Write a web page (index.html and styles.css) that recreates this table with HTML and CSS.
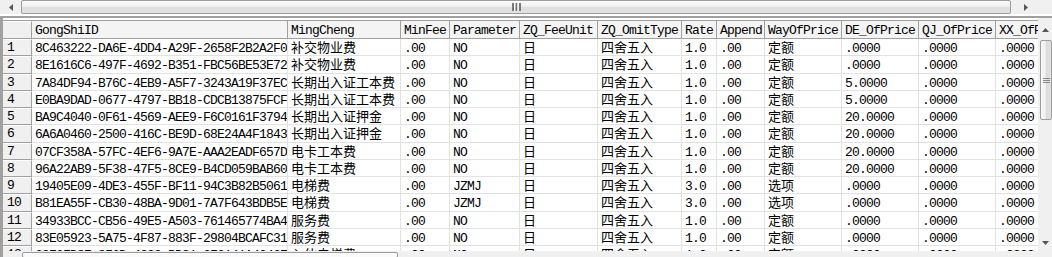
FILE: index.html
```html
<!DOCTYPE html>
<html lang="zh">
<head>
<meta charset="utf-8">
<link rel="stylesheet" href="styles.css">
</head>
<body>
<div class="win">
  <div class="hs-top">
    <div class="hs-btn"><svg width="4" height="7" viewBox="0 0 4 7"><path d="M4 0 L0 3.5 L4 7 Z" fill="#555"/></svg></div>
    <div class="hs-thumb"><svg width="9" height="8" viewBox="0 0 9 8"><g fill="#777"><rect x="0" y="0" width="2" height="8"/><rect x="3.5" y="0" width="2" height="8"/><rect x="7" y="0" width="2" height="8"/></g><g fill="#fff"><rect x="2" y="0" width="1" height="8"/><rect x="5.5" y="0" width="1" height="8"/></g></svg></div>
    <div class="hs-btn hs-right"><svg width="4" height="7" viewBox="0 0 4 7"><path d="M0 0 L4 3.5 L0 7 Z" fill="#555"/></svg></div>
    <div class="hs-corner"></div>
  </div>
  <div class="frame">
    <div class="grid">
      <div class="row head">
        <div class="rh"></div><div class="c">GongShiID</div><div class="c">MingCheng</div><div class="c">MinFee</div><div class="c">Parameter</div><div class="c">ZQ_FeeUnit</div><div class="c">ZQ_OmitType</div><div class="c">Rate</div><div class="c">Append</div><div class="c">WayOfPrice</div><div class="c">DE_OfPrice</div><div class="c">QJ_OfPrice</div><div class="c">XX_OfPrice</div>
      </div>
      <div class="row"><div class="rh">1</div><div class="c">8C463222-DA6E-4DD4-A29F-2658F2B2A2F0</div><div class="c zh">补交物业费</div><div class="c">.00</div><div class="c">NO</div><div class="c zh">日</div><div class="c zh">四舍五入</div><div class="c">1.0</div><div class="c">.00</div><div class="c zh">定额</div><div class="c">.0000</div><div class="c">.0000</div><div class="c">.0000</div></div>
      <div class="row"><div class="rh">2</div><div class="c">8E1616C6-497F-4692-B351-FBC56BE53E72</div><div class="c zh">补交物业费</div><div class="c">.00</div><div class="c">NO</div><div class="c zh">日</div><div class="c zh">四舍五入</div><div class="c">1.0</div><div class="c">.00</div><div class="c zh">定额</div><div class="c">.0000</div><div class="c">.0000</div><div class="c">.0000</div></div>
      <div class="row"><div class="rh">3</div><div class="c">7A84DF94-B76C-4EB9-A5F7-3243A19F37EC</div><div class="c zh">长期出入证工本费</div><div class="c">.00</div><div class="c">NO</div><div class="c zh">日</div><div class="c zh">四舍五入</div><div class="c">1.0</div><div class="c">.00</div><div class="c zh">定额</div><div class="c">5.0000</div><div class="c">.0000</div><div class="c">.0000</div></div>
      <div class="row"><div class="rh">4</div><div class="c">E0BA9DAD-0677-4797-BB18-CDCB13875FCF</div><div class="c zh">长期出入证工本费</div><div class="c">.00</div><div class="c">NO</div><div class="c zh">日</div><div class="c zh">四舍五入</div><div class="c">1.0</div><div class="c">.00</div><div class="c zh">定额</div><div class="c">5.0000</div><div class="c">.0000</div><div class="c">.0000</div></div>
      <div class="row"><div class="rh">5</div><div class="c">BA9C4040-0F61-4569-AEE9-F6C0161F3794</div><div class="c zh">长期出入证押金</div><div class="c">.00</div><div class="c">NO</div><div class="c zh">日</div><div class="c zh">四舍五入</div><div class="c">1.0</div><div class="c">.00</div><div class="c zh">定额</div><div class="c">20.0000</div><div class="c">.0000</div><div class="c">.0000</div></div>
      <div class="row"><div class="rh">6</div><div class="c">6A6A0460-2500-416C-BE9D-68E24A4F1843</div><div class="c zh">长期出入证押金</div><div class="c">.00</div><div class="c">NO</div><div class="c zh">日</div><div class="c zh">四舍五入</div><div class="c">1.0</div><div class="c">.00</div><div class="c zh">定额</div><div class="c">20.0000</div><div class="c">.0000</div><div class="c">.0000</div></div>
      <div class="row"><div class="rh">7</div><div class="c">07CF358A-57FC-4EF6-9A7E-AAA2EADF657D</div><div class="c zh">电卡工本费</div><div class="c">.00</div><div class="c">NO</div><div class="c zh">日</div><div class="c zh">四舍五入</div><div class="c">1.0</div><div class="c">.00</div><div class="c zh">定额</div><div class="c">20.0000</div><div class="c">.0000</div><div class="c">.0000</div></div>
      <div class="row"><div class="rh">8</div><div class="c">96A22AB9-5F38-47F5-8CE9-B4CD059BAB60</div><div class="c zh">电卡工本费</div><div class="c">.00</div><div class="c">NO</div><div class="c zh">日</div><div class="c zh">四舍五入</div><div class="c">1.0</div><div class="c">.00</div><div class="c zh">定额</div><div class="c">20.0000</div><div class="c">.0000</div><div class="c">.0000</div></div>
      <div class="row"><div class="rh">9</div><div class="c">19405E09-4DE3-455F-BF11-94C3B82B5061</div><div class="c zh">电梯费</div><div class="c">.00</div><div class="c">JZMJ</div><div class="c zh">日</div><div class="c zh">四舍五入</div><div class="c">3.0</div><div class="c">.00</div><div class="c zh">选项</div><div class="c">.0000</div><div class="c">.0000</div><div class="c">.0000</div></div>
      <div class="row"><div class="rh">10</div><div class="c">B81EA55F-CB30-48BA-9D01-7A7F643BDB5E</div><div class="c zh">电梯费</div><div class="c">.00</div><div class="c">JZMJ</div><div class="c zh">日</div><div class="c zh">四舍五入</div><div class="c">3.0</div><div class="c">.00</div><div class="c zh">选项</div><div class="c">.0000</div><div class="c">.0000</div><div class="c">.0000</div></div>
      <div class="row"><div class="rh">11</div><div class="c">34933BCC-CB56-49E5-A503-761465774BA4</div><div class="c zh">服务费</div><div class="c">.00</div><div class="c">NO</div><div class="c zh">日</div><div class="c zh">四舍五入</div><div class="c">1.0</div><div class="c">.00</div><div class="c zh">定额</div><div class="c">.0000</div><div class="c">.0000</div><div class="c">.0000</div></div>
      <div class="row"><div class="rh">12</div><div class="c">83E05923-5A75-4F87-883F-29804BCAFC31</div><div class="c zh">服务费</div><div class="c">.00</div><div class="c">NO</div><div class="c zh">日</div><div class="c zh">四舍五入</div><div class="c">1.0</div><div class="c">.00</div><div class="c zh">定额</div><div class="c">.0000</div><div class="c">.0000</div><div class="c">.0000</div></div>
      <div class="row"><div class="rh">13</div><div class="c">69E2FD8E-8F6D-4C03-BD81-6F6141A4046E</div><div class="c zh">入伙电梯费</div><div class="c">.00</div><div class="c">NO</div><div class="c zh">日</div><div class="c zh">四舍五入</div><div class="c">1.0</div><div class="c">.00</div><div class="c zh">定额</div><div class="c">.0000</div><div class="c">.0000</div><div class="c">.0000</div></div>
    </div>
    <div class="vs">
      <div class="vs-btn"><svg width="7" height="4" viewBox="0 0 7 4"><path d="M0 4 L3.5 0 L7 4 Z" fill="#555"/></svg></div>
      <div class="vs-thumb"><svg width="7" height="5" viewBox="0 0 7 5"><g fill="#888"><rect x="0" y="0" width="7" height="1"/><rect x="0" y="2" width="7" height="1"/><rect x="0" y="4" width="7" height="1"/></g></svg></div>
      <div class="vs-track"></div>
      <div class="vs-btn"><svg width="7" height="4" viewBox="0 0 7 4"><path d="M0 0 L3.5 4 L7 0 Z" fill="#555"/></svg></div>
    </div>
  </div>
  <div class="hs-bottom"><div class="hb-thumb"></div></div>
</div>
</body>
</html>
```

FILE: styles.css
```css
html, body {
  margin: 0;
  padding: 0;
}
body {
  width: 1052px;
  height: 257px;
  overflow: hidden;
  background: #fff;
  font-family: "Liberation Mono", "Noto Sans CJK SC", monospace;
  font-size: 13px;
  color: #000;
}
.win {
  display: flex;
  flex-direction: column;
  height: 257px;
}
.hs-top {
  height: 14px;
  flex: none;
  display: flex;
  background: #f0f0f0;
}
.hs-btn {
  width: 21px;
  flex: none;
  display: flex;
  align-items: center;
  justify-content: center;
}
.hs-right {
  width: 24px;
  margin-left: 3px;
}
.hs-thumb {
  flex: 1;
  box-sizing: border-box;
  border: 1px solid #9c9c9c;
  border-radius: 2px;
  background: linear-gradient(#fbfbfb, #ececec 50%, #dcdcdc 55%, #e2e2e2);
  display: flex;
  align-items: center;
  justify-content: center;
}
.hs-corner {
  width: 14px;
  flex: none;
  background: #f0f0f0;
}
.frame {
  flex: 1;
  min-height: 0;
  display: flex;
  margin-top: 2px;
  border-top: 2px solid #a0a0a0;
  border-left: 3px solid #a0a0a0;
  box-sizing: border-box;
  overflow: hidden;
  background: #fff;
}
.grid {
  flex: 1;
  min-width: 0;
  overflow: hidden;
  padding-top: 2px;
  background: #fff;
}
.row {
  display: grid;
  grid-template-columns: 29px 256px 113px 49px 70px 78px 84px 35px 48px 77px 77px 77px 77px;
  height: 17.27px;
  box-sizing: border-box;
}
.c, .rh {
  box-sizing: border-box;
  border-right: 1px solid #e2e2e2;
  border-bottom: 1px solid #e2e2e2;
  padding: 3px 0 0 3px;
  line-height: 14px;
  white-space: nowrap;
  overflow: hidden;
  letter-spacing: -0.8px;
}
.zh {
  letter-spacing: 0;
  line-height: 14px;
}
.rh {
  background: #f0f0f0;
  border-right: 1px solid #a0a0a0;
  border-bottom: 1px solid #a0a0a0;
  border-top: 1px solid #fff;
  padding-left: 4px;
  padding-top: 1px;
}
.head {
  height: 19px;
  border-top: 1px solid #a0a0a0;
}
.head .c {
  background: #f4f4f4;
  border-right: 1px solid #a0a0a0;
  border-bottom: 1px solid #a0a0a0;
  padding-top: 3px;
}
.vs {
  width: 14px;
  flex: none;
  display: flex;
  flex-direction: column;
  background: #f0f0f0;
  padding-top: 3px;
}
.vs-btn {
  height: 17px;
  flex: none;
  display: flex;
  align-items: center;
  justify-content: center;
}
.vs-thumb {
  height: 80px;
  flex: none;
  margin: 2px 0 0 2px;
  box-sizing: border-box;
  border: 1px solid #9c9c9c;
  border-radius: 2px;
  background: linear-gradient(90deg, #fbfbfb, #ececec 50%, #dcdcdc 55%, #e2e2e2);
  display: flex;
  align-items: center;
  justify-content: center;
}
.vs-track {
  flex: 1;
}
.hs-bottom {
  height: 5px;
  flex: none;
  background: #f0f0f0;
  border-left: 3px solid #a0a0a0;
  padding-left: 19px;
  padding-top: 1px;
}
.hb-thumb {
  width: 376px;
  height: 6px;
  box-sizing: border-box;
  border: 1px solid #9c9c9c;
  border-radius: 2px;
  background: #fbfbfb;
}
```
